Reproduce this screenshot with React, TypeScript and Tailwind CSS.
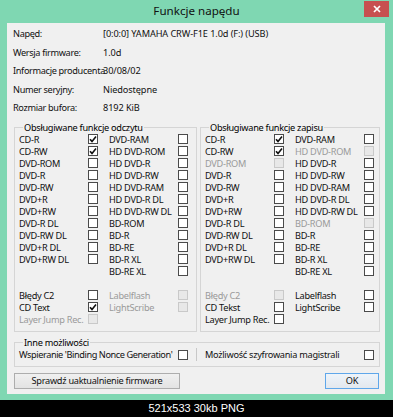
import React from "react";

type Item = [string, 0 | 1 | 2] | null;

// 0 = unchecked, 1 = checked, 2 = disabled
const readRows: [Item, Item][] = [
  [["CD-R", 1], ["DVD-RAM", 0]],
  [["CD-RW", 1], ["HD DVD-ROM", 0]],
  [["DVD-ROM", 0], ["HD DVD-R", 0]],
  [["DVD-R", 0], ["HD DVD-RW", 0]],
  [["DVD-RW", 0], ["HD DVD-RAM", 0]],
  [["DVD+R", 0], ["HD DVD-R DL", 0]],
  [["DVD+RW", 0], ["HD DVD-RW DL", 0]],
  [["DVD-R DL", 0], ["BD-ROM", 0]],
  [["DVD-RW DL", 0], ["BD-R", 0]],
  [["DVD+R DL", 0], ["BD-RE", 0]],
  [["DVD+RW DL", 0], ["BD-R XL", 0]],
  [null, ["BD-RE XL", 0]],
  [null, null],
  [["Błędy C2", 0], ["Labelflash", 2]],
  [["CD Text", 1], ["LightScribe", 2]],
  [["Layer Jump Rec.", 2], null],
];

const writeRows: [Item, Item][] = [
  [["CD-R", 1], ["DVD-RAM", 0]],
  [["CD-RW", 1], ["HD DVD-ROM", 2]],
  [["DVD-ROM", 2], ["HD DVD-R", 0]],
  [["DVD-R", 0], ["HD DVD-RW", 0]],
  [["DVD-RW", 0], ["HD DVD-RAM", 0]],
  [["DVD+R", 0], ["HD DVD-R DL", 0]],
  [["DVD+RW", 0], ["HD DVD-RW DL", 0]],
  [["DVD-R DL", 0], ["BD-ROM", 2]],
  [["DVD-RW DL", 0], ["BD-R", 0]],
  [["DVD+R DL", 0], ["BD-RE", 0]],
  [["DVD+RW DL", 0], ["BD-R XL", 0]],
  [null, ["BD-RE XL", 0]],
  [null, null],
  [["Błędy C2", 2], ["Labelflash", 0]],
  [["CD Tekst", 0], ["LightScribe", 0]],
  [["Layer Jump Rec.", 0], null],
];

const info = [
  ["Napęd:", "[0:0:0] YAMAHA CRW-F1E 1.0d (F:) (USB)"],
  ["Wersja firmware:", "1.0d"],
  ["Informacje producenta", "30/08/02"],
  ["Numer seryjny:", "Niedostępne"],
  ["Rozmiar bufora:", "8192 KiB"],
];

const Check = ({ state }: { state: 0 | 1 | 2 }) => (
  <span
    className={
      state === 2
        ? "block w-[10px] h-[10px] border border-[#c9c9c9] bg-[#e8e8e8]"
        : "flex items-center justify-center w-[10px] h-[10px] border border-[#4a4a4a] bg-white"
    }
  >
    {state === 1 && (
      <svg width="8" height="8" viewBox="0 0 8 8">
        <path d="M1 4.2 L3 6.4 L7 1.4" fill="none" stroke="#111" strokeWidth="1.6" />
      </svg>
    )}
  </span>
);

const Cell = ({ item }: { item: Item }) =>
  item ? (
    <>
      <span className={item[1] === 2 ? "whitespace-nowrap text-[#9a9a9a]" : "whitespace-nowrap text-[#111]"}>
        {item[0]}
      </span>
      <Check state={item[1]} />
    </>
  ) : (
    <>
      <span />
      <span />
    </>
  );

const Group = ({ title, rows, width }: { title: string; rows: [Item, Item][]; width: string }) => (
  <fieldset className={`${width} border border-[#d5d5d5] pl-[4px] pb-[6px]`}>
    <legend className="ml-[4px] px-[1px] leading-[11px] whitespace-nowrap">{title}</legend>
    {rows.map((r, i) => (
      <div key={i} className="grid grid-cols-[69px_10px_11px_69px_10px] items-center h-[12px]">
        <Cell item={r[0]} />
        <span />
        <Cell item={r[1]} />
      </div>
    ))}
  </fieldset>
);

const App = () => {
  return (
    <div className="w-[393px] h-[417px] bg-black flex flex-col text-[9.2px] tracking-[-0.28px] font-['Noto_Sans',sans-serif]">
      <div className="h-[400px] bg-[#7fd7b2] flex flex-col">
        <div className="relative h-[23px] flex items-center justify-center">
          <span className="text-[11.6px] tracking-normal text-[#111] pb-[1px]">Funkcje napędu</span>
          <div className="absolute left-[364px] top-[1px] w-[25px] h-[16px] bg-[#c75050] flex items-center justify-center">
            <svg width="8" height="8" viewBox="0 0 8 8">
              <path d="M1 1 L7 7 M7 1 L1 7" stroke="white" strokeWidth="1.7" />
            </svg>
          </div>
        </div>
        <div className="ml-[7px] w-[378px] h-[371px] bg-[#f0f0f0] pl-[7px] pr-[5px] pt-[2px]">
          {info.map(([k, v]) => (
            <div key={k} className="flex items-center h-[18.5px] -ml-[1px] text-[#111]">
              <span className="w-[90px] whitespace-nowrap tracking-[-0.35px]">{k}</span>
              <span className="whitespace-nowrap tracking-[-0.1px]">{v}</span>
            </div>
          ))}
          <div className="flex gap-[3px] mt-[4px]">
            <Group title="Obsługiwane funkcje odczytu" rows={readRows} width="w-[183px]" />
            <Group title="Obsługiwane funkcje zapisu" rows={writeRows} width="w-[180px]" />
          </div>
          <fieldset className="w-[366px] border border-[#d5d5d5] pl-[4px] pb-[4px] mt-[5px]">
            <legend className="ml-[4px] px-[1px] leading-[11px]">Inne możliwości</legend>
            <div className="grid grid-cols-[159px_10px_8px_1px_8px_159px_10px] items-center h-[14px] text-[#111]">
              <span className="whitespace-nowrap tracking-[-0.42px]">Wspieranie 'Binding Nonce Generation'</span>
              <Check state={0} />
              <span />
              <span className="h-[13px] bg-[#c8c8c8]" />
              <span />
              <span className="whitespace-nowrap">Możliwość szyfrowania magistrali</span>
              <Check state={0} />
            </div>
          </fieldset>
          <div className="flex justify-between mt-[6px] pr-[1px]">
            <button className="w-[166px] h-[16px] border border-[#adadad] bg-gradient-to-b from-[#f0f0f0] to-[#e3e3e3] text-[#111] leading-none">
              Sprawdź uaktualnienie firmware
            </button>
            <button className="w-[54px] h-[16px] border border-[#5fa7ea] bg-gradient-to-b from-[#eef4fa] to-[#e3e8ee] text-[#111] leading-none">
              OK
            </button>
          </div>
        </div>
      </div>
      <div className="flex-1 flex items-center justify-center text-white text-[11px] tracking-normal font-['Liberation_Sans',sans-serif]">
        521x533 30kb PNG
      </div>
    </div>
  );
};

export default App;
